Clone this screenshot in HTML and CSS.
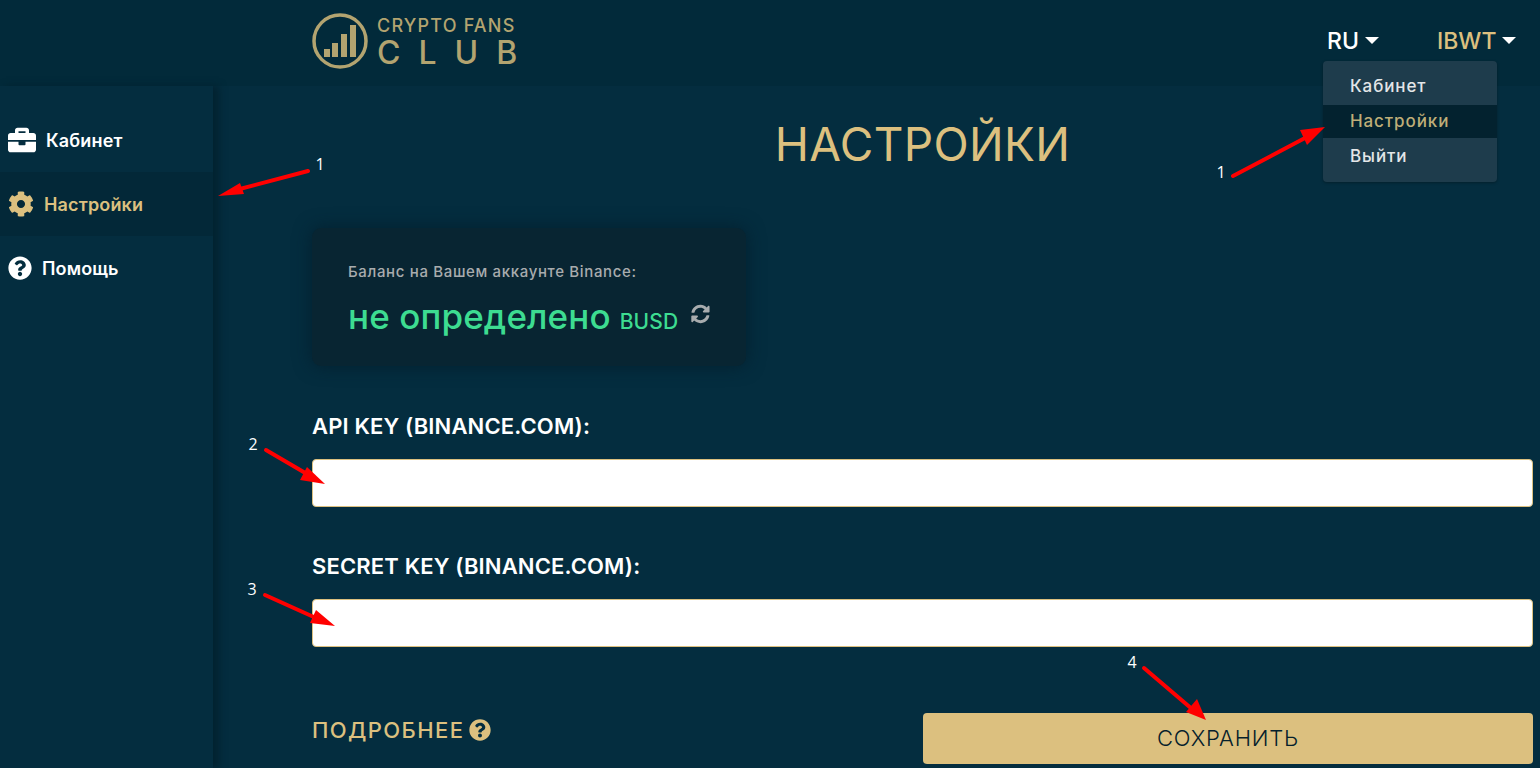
FILE: index.html
```html
<!DOCTYPE html>
<html lang="ru">
<head>
<meta charset="utf-8">
<title>Настройки</title>
<link rel="stylesheet" href="styles.css">
</head>
<body>
<header class="topbar">
  <a class="logo">
    <svg class="logo-mark" viewBox="0 0 56 56"><circle cx="28" cy="28" r="26" fill="none" stroke="#b3a470" stroke-width="3.5"/><path fill="#b3a470" d="M12 36h6v8h-6zM20 30h6v14h-6zM29 21h6v23h-6zM38 12h6v32h-6z"/></svg>
    <span class="logo-text"><span class="logo-top">CRYPTO FANS</span><span class="logo-bottom">CLUB</span></span>
  </a>
  <nav class="topnav">
    <span class="lang">RU<i class="caret"></i></span>
    <span class="user">IBWT<i class="caret"></i></span>
    <ul class="dropdown">
      <li>Кабинет</li>
      <li class="active">Настройки</li>
      <li>Выйти</li>
    </ul>
  </nav>
</header>
<div class="layout">
  <aside class="sidebar">
    <a class="side-item">
      <svg class="ic-brief" viewBox="0 0 512 512"><path fill="currentColor" d="M320 336c0 8.84-7.16 16-16 16h-96c-8.84 0-16-7.16-16-16v-48H0v144c0 25.6 22.4 48 48 48h416c25.6 0 48-22.4 48-48V288H320v48zm144-208h-80V80c0-25.6-22.4-48-48-48H176c-25.6 0-48 22.4-48 48v48H48c-25.6 0-48 22.4-48 48v80h512v-80c0-25.6-22.4-48-48-48zm-144 0H192V96h128v32z"/></svg>
      <span>Кабинет</span>
    </a>
    <a class="side-item active">
      <svg class="ic-cog" viewBox="0 0 512 512"><path fill="currentColor" d="M487.4 315.7l-42.6-24.6c4.3-23.2 4.3-47 0-70.2l42.6-24.6c4.9-2.8 7.1-8.6 5.5-14-11.1-35.6-30-67.8-54.7-94.6-3.8-4.1-10-5.1-14.8-2.3L380.8 110c-17.9-15.4-38.5-27.3-60.8-35.1V25.8c0-5.6-3.9-10.5-9.4-11.7-36.7-8.2-74.3-7.8-109.2 0-5.5 1.2-9.4 6.1-9.4 11.7V75c-22.2 7.9-42.8 19.8-60.8 35.1L88.7 85.5c-4.9-2.8-11-1.9-14.8 2.3-24.7 26.7-43.6 58.9-54.7 94.6-1.7 5.4.6 11.2 5.5 14L67.3 221c-4.3 23.2-4.3 47 0 70.2l-42.6 24.6c-4.9 2.8-7.1 8.6-5.5 14 11.1 35.6 30 67.8 54.7 94.6 3.8 4.1 10 5.1 14.8 2.3l42.6-24.6c17.9 15.4 38.5 27.3 60.8 35.1v49.2c0 5.6 3.9 10.5 9.4 11.7 36.7 8.2 74.3 7.8 109.2 0 5.5-1.2 9.4-6.1 9.4-11.7v-49.2c22.2-7.9 42.8-19.8 60.8-35.1l42.6 24.6c4.9 2.8 11 1.9 14.8-2.3 24.7-26.7 43.6-58.9 54.7-94.6 1.5-5.5-.7-11.3-5.6-14.1zM256 336c-44.1 0-80-35.9-80-80s35.9-80 80-80 80 35.9 80 80-35.9 80-80 80z"/></svg>
      <span>Настройки</span>
    </a>
    <a class="side-item">
      <svg class="ic-help" viewBox="0 0 512 512"><path fill="currentColor" d="M504 256c0 136.997-111.043 248-248 248S8 392.997 8 256C8 119.083 119.043 8 256 8s248 111.083 248 248zM262.655 90c-54.497 0-89.255 22.957-116.549 63.758-3.536 5.286-2.353 12.415 2.715 16.258l34.699 26.31c5.205 3.947 12.621 3.008 16.665-2.122 17.864-22.658 30.113-35.797 57.303-35.797 20.429 0 45.698 13.148 45.698 32.958 0 14.976-12.363 22.667-32.534 33.976C247.128 238.528 216 254.941 216 296v4c0 6.627 5.373 12 12 12h56c6.627 0 12-5.373 12-12v-1.333c0-28.462 83.186-29.647 83.186-106.667 0-58.002-60.165-102-116.531-102zM256 338c-25.365 0-46 20.635-46 46 0 25.364 20.635 46 46 46s46-20.636 46-46c0-25.365-20.635-46-46-46z"/></svg>
      <span>Помощь</span>
    </a>
  </aside>
  <main class="content">
    <h1 class="title">НАСТРОЙКИ</h1>
    <section class="balance">
      <p class="balance-label">Баланс на Вашем аккаунте Binance:</p>
      <p class="balance-value"><span>не определено</span><small>BUSD</small>
        <svg class="ic-sync" viewBox="0 0 512 512"><path fill="currentColor" d="M370.72 133.28C339.458 104.008 298.888 87.962 255.848 88c-77.458.068-144.328 53.178-162.791 126.85-1.344 5.363-6.122 9.15-11.651 9.15H24.103c-7.498 0-13.194-6.807-11.807-14.176C33.933 94.924 134.813 8 256 8c66.448 0 126.791 26.136 171.315 68.685L463.03 40.97C478.149 25.851 504 36.559 504 57.941V192c0 13.255-10.745 24-24 24H345.941c-21.382 0-32.09-25.851-16.971-40.971l41.75-41.749zM32 296h134.059c21.382 0 32.09 25.851 16.971 40.971l-41.75 41.75c31.262 29.273 71.835 45.319 114.876 45.28 77.418-.07 144.315-53.144 162.787-126.849 1.344-5.363 6.122-9.15 11.651-9.15h57.304c7.498 0 13.194 6.807 11.807 14.176C478.067 417.076 377.187 504 256 504c-66.448 0-126.791-26.136-171.315-68.685L48.97 471.03C33.851 486.149 8 475.441 8 454.059V320c0-13.255 10.745-24 24-24z"/></svg>
      </p>
    </section>
    <label class="field-label">API KEY (BINANCE.COM):</label>
    <input class="field" type="text">
    <label class="field-label second">SECRET KEY (BINANCE.COM):</label>
    <input class="field" type="text">
    <div class="actions">
      <a class="more">ПОДРОБНЕЕ
        <svg class="ic-more" viewBox="0 0 512 512"><path fill="currentColor" d="M504 256c0 136.997-111.043 248-248 248S8 392.997 8 256C8 119.083 119.043 8 256 8s248 111.083 248 248zM262.655 90c-54.497 0-89.255 22.957-116.549 63.758-3.536 5.286-2.353 12.415 2.715 16.258l34.699 26.31c5.205 3.947 12.621 3.008 16.665-2.122 17.864-22.658 30.113-35.797 57.303-35.797 20.429 0 45.698 13.148 45.698 32.958 0 14.976-12.363 22.667-32.534 33.976C247.128 238.528 216 254.941 216 296v4c0 6.627 5.373 12 12 12h56c6.627 0 12-5.373 12-12v-1.333c0-28.462 83.186-29.647 83.186-106.667 0-58.002-60.165-102-116.531-102zM256 338c-25.365 0-46 20.635-46 46 0 25.364 20.635 46 46 46s46-20.636 46-46c0-25.365-20.635-46-46-46z"/></svg>
      </a>
      <button class="save" type="button">СОХРАНИТЬ</button>
    </div>
  </main>
</div>
<svg class="annotations" viewBox="0 0 1540 768">
  <g fill="#ff0000" stroke="#ff0000">
    <line x1="308" y1="171" x2="236" y2="190" stroke-width="4" stroke-linecap="round"/>
    <polygon points="218,196 240,183 244,194" stroke="none"/>
    <line x1="1233" y1="176" x2="1305" y2="138" stroke-width="4" stroke-linecap="round"/>
    <polygon points="1325,127 1300,130 1307,145" stroke="none"/>
    <line x1="266" y1="450" x2="307" y2="474" stroke-width="4" stroke-linecap="round"/>
    <polygon points="325,484 307,467 300,480" stroke="none"/>
    <line x1="265" y1="595" x2="316" y2="618" stroke-width="4" stroke-linecap="round"/>
    <polygon points="335,626 316,610 310,623" stroke="none"/>
    <line x1="1144" y1="668" x2="1192" y2="709" stroke-width="4" stroke-linecap="round"/>
    <polygon points="1206,720 1197,699 1186,712" stroke="none"/>
  </g>
  <g class="note-text">
    <text x="320" y="170" text-anchor="middle">1</text>
    <text x="1221" y="178" text-anchor="middle">1</text>
    <text x="253" y="450" text-anchor="middle">2</text>
    <text x="252" y="595" text-anchor="middle">3</text>
    <text x="1132" y="668" text-anchor="middle">4</text>
  </g>
</svg>
</body>
</html>
```
FILE: styles.css
```css
* { box-sizing: border-box; }
html, body { margin: 0; height: 768px; overflow: hidden; }
body {
  position: relative;
  background: #042d3f;
  font-family: Inter, "Noto Sans", sans-serif;
  color: #fff;
}
.topbar {
  height: 86px;
  background: #022a3a;
  display: flex;
  justify-content: space-between;
  padding-left: 312px;
}
.logo { display: flex; gap: 9px; height: 56px; margin-top: 13px; color: #b3a470; }
.logo-mark { width: 56px; height: 56px; }
.logo-text { display: flex; flex-direction: column; font-weight: 500; }
.logo-top { font-size: 18px; line-height: 22px; margin-top: 2px; letter-spacing: 1.2px; white-space: nowrap; }
.logo-bottom { font-size: 32px; line-height: 32px; letter-spacing: 18px; font-weight: 500; }
.topnav { position: relative; display: flex; width: 217px; padding: 28px 0 0 4px; font-size: 23px; line-height: 26px; font-weight: 500; }
.lang { width: 110px; }
.user { color: #dcc07f; }
.caret { display: inline-block; margin: 0 0 4px 6px; vertical-align: middle; border: 7px solid transparent; border-top-color: #fff; border-bottom: 0; }
.dropdown {
  position: absolute;
  top: 61px;
  left: 0;
  width: 174px;
  margin: 0;
  padding: 9px 0 7px;
  list-style: none;
  background: #1e3c4c;
  border-radius: 4px;
  box-shadow: 0 1px 3px rgba(0,0,0,.3);
  font-size: 17px;
  font-weight: 500;
  color: #e3e6e8;
}
.dropdown li { height: 35px; line-height: 33px; padding-left: 27px; letter-spacing: .9px; }
.dropdown .active { height: 33px; margin-bottom: 2px; background: #03222f; color: #bfae78; }
.layout { display: flex; height: 682px; }
.sidebar {
  width: 213px;
  flex: none;
  padding-top: 22px;
  box-shadow: 6px 0 7px rgba(2,33,46,.85);
}
.side-item { display: flex; align-items: center; height: 64px; padding-left: 8px; gap: 10px; font-size: 18px; font-weight: 600; letter-spacing: .15px; }
.side-item.active { background: #032838; color: #dcc07f; }
.ic-brief { width: 28px; height: 28px; }
.ic-cog { width: 26px; height: 26px; }
.ic-help { width: 24px; height: 24px; }
.content { flex: 1; padding: 0 7px 0 99px; min-width: 0; }
.title { margin: 34px 0 0; height: 48px; text-align: center; font-size: 46px; line-height: 48px; font-weight: 400; letter-spacing: .35px; color: #dcc07f; }
.balance {
  width: 434px;
  height: 138px;
  margin-top: 60px;
  padding: 35px 36px;
  background: #082532;
  border-radius: 9px;
  box-shadow: 0 0 18px rgba(1,24,36,.6);
}
.balance-label { margin: 0; font-size: 15px; line-height: 18px; font-weight: 500; letter-spacing: .65px; color: #a8acae; }
.balance-value { display: flex; align-items: baseline; margin: 14px 0 0; font-size: 35px; line-height: 42px; font-weight: 500; letter-spacing: .1px; color: #3ddc91; white-space: nowrap; }
.balance-value small { font-size: 21px; margin-left: 9px; letter-spacing: .1px; }
.ic-sync { align-self: flex-start; width: 20px; height: 20px; margin: 9px 0 0 13px; color: #a8acae; }
.field-label { display: block; margin-top: 47px; font-size: 22px; line-height: 26px; font-weight: 600; letter-spacing: .15px; }
.field-label.second { margin-top: 46px; }
.field { display: block; width: 100%; height: 48px; margin-top: 20px; padding: 0 12px; background: #fff; border: 1px solid #dcc07f; border-radius: 4px; }
.actions { display: flex; justify-content: space-between; align-items: center; height: 51px; margin-top: 66px; }
.more { display: flex; align-items: center; gap: 5px; font-size: 22px; font-weight: 500; letter-spacing: 1.4px; color: #dcc07f; margin-top: -17px; }
.ic-more { width: 22px; height: 22px; }
.save { width: 610px; height: 51px; padding: 0 0 2px; border: 0; border-radius: 4px; background: #dcc07f; font-family: inherit; font-size: 22px; font-weight: 300; letter-spacing: .8px; color: #05202c; }
.annotations { position: absolute; left: 0; top: 0; width: 1540px; height: 768px; pointer-events: none; }
.note-text { fill: #fff; font-family: "Open Sans", sans-serif; font-size: 16px; }
```
